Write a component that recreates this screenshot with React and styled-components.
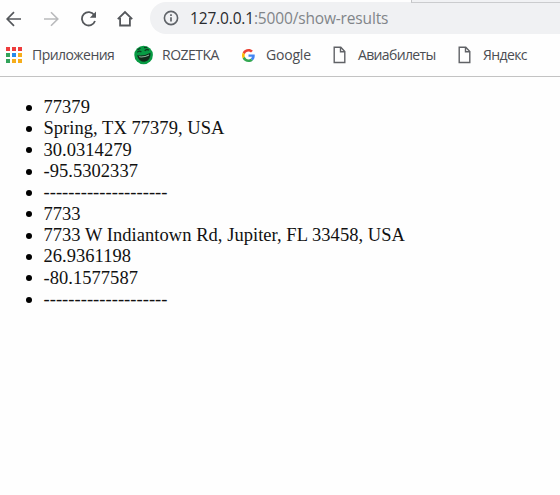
import React from "react";
import styled, { createGlobalStyle } from "styled-components";

const GlobalStyle = createGlobalStyle`
  * { box-sizing: border-box; }
  body { margin: 0; background: #fefefe; overflow: hidden; }
`;

const Page = styled.div`
  width: 560px;
  height: 495px;
  display: flex;
  flex-direction: column;
  background: #fefefe;
`;

const Chrome = styled.header`
  height: 77px;
  flex: none;
  border-bottom: 1px solid #c3c3c3;
  font-family: "Open Sans", "Noto Sans", sans-serif;
`;

const TabEdge = styled.div`
  position: relative;
  z-index: 1;
  height: 3px;
  margin-left: 411px;
  border-left: 1px solid #c4c5c7;
  border-bottom: 1px solid #cbccce;
  background: #f1f2f4;
`;

const Toolbar = styled.div`
  height: 31px;
  display: flex;
  align-items: center;
`;

const NavButton = styled.button`
  width: ${(p) => p.$width}px;
  height: 30px;
  padding: 0 0 0 ${(p) => p.$inset}px;
  border: 0;
  background: none;
  display: flex;
  align-items: center;
  color: ${(p) => (p.$disabled ? "#b9babc" : "#54575b")};
  svg { flex: none; display: block; }
`;

const AddressBar = styled.div`
  flex: 1;
  height: 32px;
  margin-top: -1px;
  padding-left: 13px;
  display: flex;
  align-items: center;
  border-radius: 16px 0 0 16px;
  background: #f0f1f3;
  color: #5f6368;
  svg { flex: none; }
`;

const Url = styled.span`
  margin-left: 11px;
  font-size: 15.5px;
  line-height: 20px;
  letter-spacing: ${(p) => p.$tracking}px;
  color: #818589;
  white-space: nowrap;
`;

const Host = styled.span`
  color: #292b2e;
`;

const Bookmarks = styled.nav`
  height: 42px;
  padding-left: 6px;
  display: flex;
  align-items: center;
`;

const Bookmark = styled.div`
  width: ${(p) => p.$width}px;
  flex: none;
  display: flex;
  align-items: center;
`;

const BookmarkIcon = styled.span`
  width: ${(p) => p.$slot}px;
  height: 20px;
  flex: none;
  display: flex;
  align-items: center;
`;

const BookmarkLabel = styled.span`
  font-size: 14px;
  line-height: 20px;
  letter-spacing: ${(p) => p.$tracking}px;
  color: #4b4d52;
  white-space: nowrap;
`;

const Results = styled.ul`
  margin: 20px 0 0;
  padding: 0 0 0 43.5px;
  list-style: none;
  font-family: "Liberation Serif", "Times New Roman", serif;
  font-size: 18.5px;
  line-height: 21.33px;
  letter-spacing: 0.04px;
  color: #111;
`;

const Result = styled.li`
  display: flex;
  align-items: center;
  height: 21.33px;
  margin-left: -17.5px;
  white-space: nowrap;

  &::before {
    content: "";
    width: 6px;
    height: 6px;
    margin-right: 11.5px;
    border-radius: 50%;
    background: #000;
  }
`;

const Back = () => (
  <svg width="16" height="16" viewBox="0 0 16 16" fill="none" stroke="currentColor" strokeWidth="1.7">
    <path d="M15 8H1.7M8 1.2 1.2 8 8 14.8" />
  </svg>
);

const Forward = () => (
  <svg width="16" height="16" viewBox="0 0 16 16" fill="none" stroke="currentColor" strokeWidth="1.6">
    <path d="M1 8h13.3M8 1.2 14.8 8 8 14.8" />
  </svg>
);

const Reload = () => (
  <svg width="18" height="16" viewBox="0 0 18 16" fill="none">
    <path d="M14.2 4A6.7 6.7 0 1 0 15 10" stroke="currentColor" strokeWidth="1.8" />
    <path d="M16 .6v6.2H9.8z" fill="currentColor" />
  </svg>
);

const Home = () => (
  <svg width="17" height="17" viewBox="0 0 17 17" fill="none" stroke="currentColor" strokeWidth="1.8">
    <path d="M.8 9.2 8 2l7.2 7.2M3.1 8v7.5h9.8V8" />
  </svg>
);

const Info = () => (
  <svg width="16" height="16" viewBox="0 0 16 16" fill="none" stroke="currentColor">
    <circle cx="8" cy="8" r="6.6" strokeWidth="1.6" />
    <path d="M8 7.2v4.3M8 4.3v1.6" strokeWidth="1.7" />
  </svg>
);

const APP_COLORS = ["#ee3c3c", "#ee3c3c", "#ee3c3c", "#32a35a", "#2589ea", "#f6ad1b", "#32a35a", "#f6ad1b", "#f6ad1b"];

const Apps = () => (
  <svg width="16" height="16" viewBox="0 0 16 16">
    {APP_COLORS.map((color, i) => (
      <rect key={i} x={(i % 3) * 6} y={Math.floor(i / 3) * 6} width="4" height="4" fill={color} />
    ))}
  </svg>
);

const Smiley = () => (
  <svg width="20" height="20" viewBox="0 0 20 20">
    <circle cx="9.6" cy="10" r="9.3" fill="#079a43" />
    <path d="M3 10.2Q10 11.5 16.5 7.8 16.8 15.8 10.6 16.8 5 17 3 10.2Z" fill="#102b1a" />
    <path d="M4.8 11.3q5.5.7 10.3-1.8l-.3 1.2q-4.8 2.2-9.5 1.6z" fill="#8fb89d" />
    <path d="M3.3 7.3q1.7-2.2 4.1-.3M3.5 4.8l3-1.6M10.7 5.9q2-2.4 4.2-.7M10 2.7l3.2-.3" fill="none" stroke="#0b3e20" strokeWidth="1.3" />
  </svg>
);

const GoogleLogo = () => (
  <svg width="13" height="13" viewBox="0 0 48 48">
    <path fill="#ea4335" d="M24 9.5c3.5 0 6.7 1.2 9.2 3.6l6.9-6.9C35.9 2.4 30.5 0 24 0 14.6 0 6.5 5.4 2.6 13.2l8 6.2C12.4 13.7 17.7 9.5 24 9.5z" />
    <path fill="#4285f4" d="M47 24.5c0-1.6-.2-3.1-.4-4.5H24v9h12.9c-.6 3-2.3 5.5-4.8 7.2l7.7 6C44.4 38 47 31.8 47 24.5z" />
    <path fill="#fbbc05" d="M10.5 28.6c-.5-1.5-.8-3-.8-4.6s.3-3.1.8-4.6l-8-6.2C.9 16.5 0 20.1 0 24s.9 7.5 2.6 10.8z" />
    <path fill="#34a853" d="M24 48c6.5 0 11.9-2.1 15.9-5.8l-7.7-6c-2.2 1.5-4.9 2.3-8.2 2.3-6.3 0-11.6-4.2-13.5-9.9l-8 6.2C6.5 42.6 14.6 48 24 48z" />
  </svg>
);

const FileIcon = () => (
  <svg width="13" height="18" viewBox="0 0 13 18" fill="none" stroke="#606266" strokeWidth="1.4">
    <path d="M1.2 1.2h6.6l4 4.3v11H1.2zM7.5 1.2v4.6h4.3" />
  </svg>
);

const BOOKMARKS = [
  { label: "Приложения", icon: <Apps />, width: 128, slot: 26, tracking: -0.55 },
  { label: "ROZETKA", icon: <Smiley />, width: 108, slot: 28, tracking: -0.5 },
  { label: "Google", icon: <GoogleLogo />, width: 91, slot: 24, tracking: -0.2 },
  { label: "Авиабилеты", icon: <FileIcon />, width: 125, slot: 25, tracking: -0.65 },
  { label: "Яндекс", icon: <FileIcon />, width: 90, slot: 25, tracking: -0.6 },
];

const RESULTS = [
  "77379",
  "Spring, TX 77379, USA",
  "30.0314279",
  "-95.5302337",
  "--------------------",
  "7733",
  "7733 W Indiantown Rd, Jupiter, FL 33458, USA",
  "26.9361198",
  "-80.1577587",
  "--------------------",
];

export default function App() {
  return (
    <Page>
      <GlobalStyle />
      <Chrome>
        <TabEdge />
        <Toolbar>
          <NavButton $width={43} $inset={6} aria-label="Back"><Back /></NavButton>
          <NavButton $width={36} $inset={0} $disabled aria-label="Forward"><Forward /></NavButton>
          <NavButton $width={38} $inset={1} aria-label="Reload"><Reload /></NavButton>
          <NavButton $width={33} $inset={0} aria-label="Home"><Home /></NavButton>
          <AddressBar>
            <Info />
            <Url $tracking={-0.16}><Host>127.0.0.1</Host>:5000/show-results</Url>
          </AddressBar>
        </Toolbar>
        <Bookmarks>
          {BOOKMARKS.map((b) => (
            <Bookmark key={b.label} $width={b.width}>
              <BookmarkIcon $slot={b.slot}>{b.icon}</BookmarkIcon>
              <BookmarkLabel $tracking={b.tracking}>{b.label}</BookmarkLabel>
            </Bookmark>
          ))}
        </Bookmarks>
      </Chrome>
      <Results>
        {RESULTS.map((text, i) => (
          <Result key={i}>{text}</Result>
        ))}
      </Results>
    </Page>
  );
}
